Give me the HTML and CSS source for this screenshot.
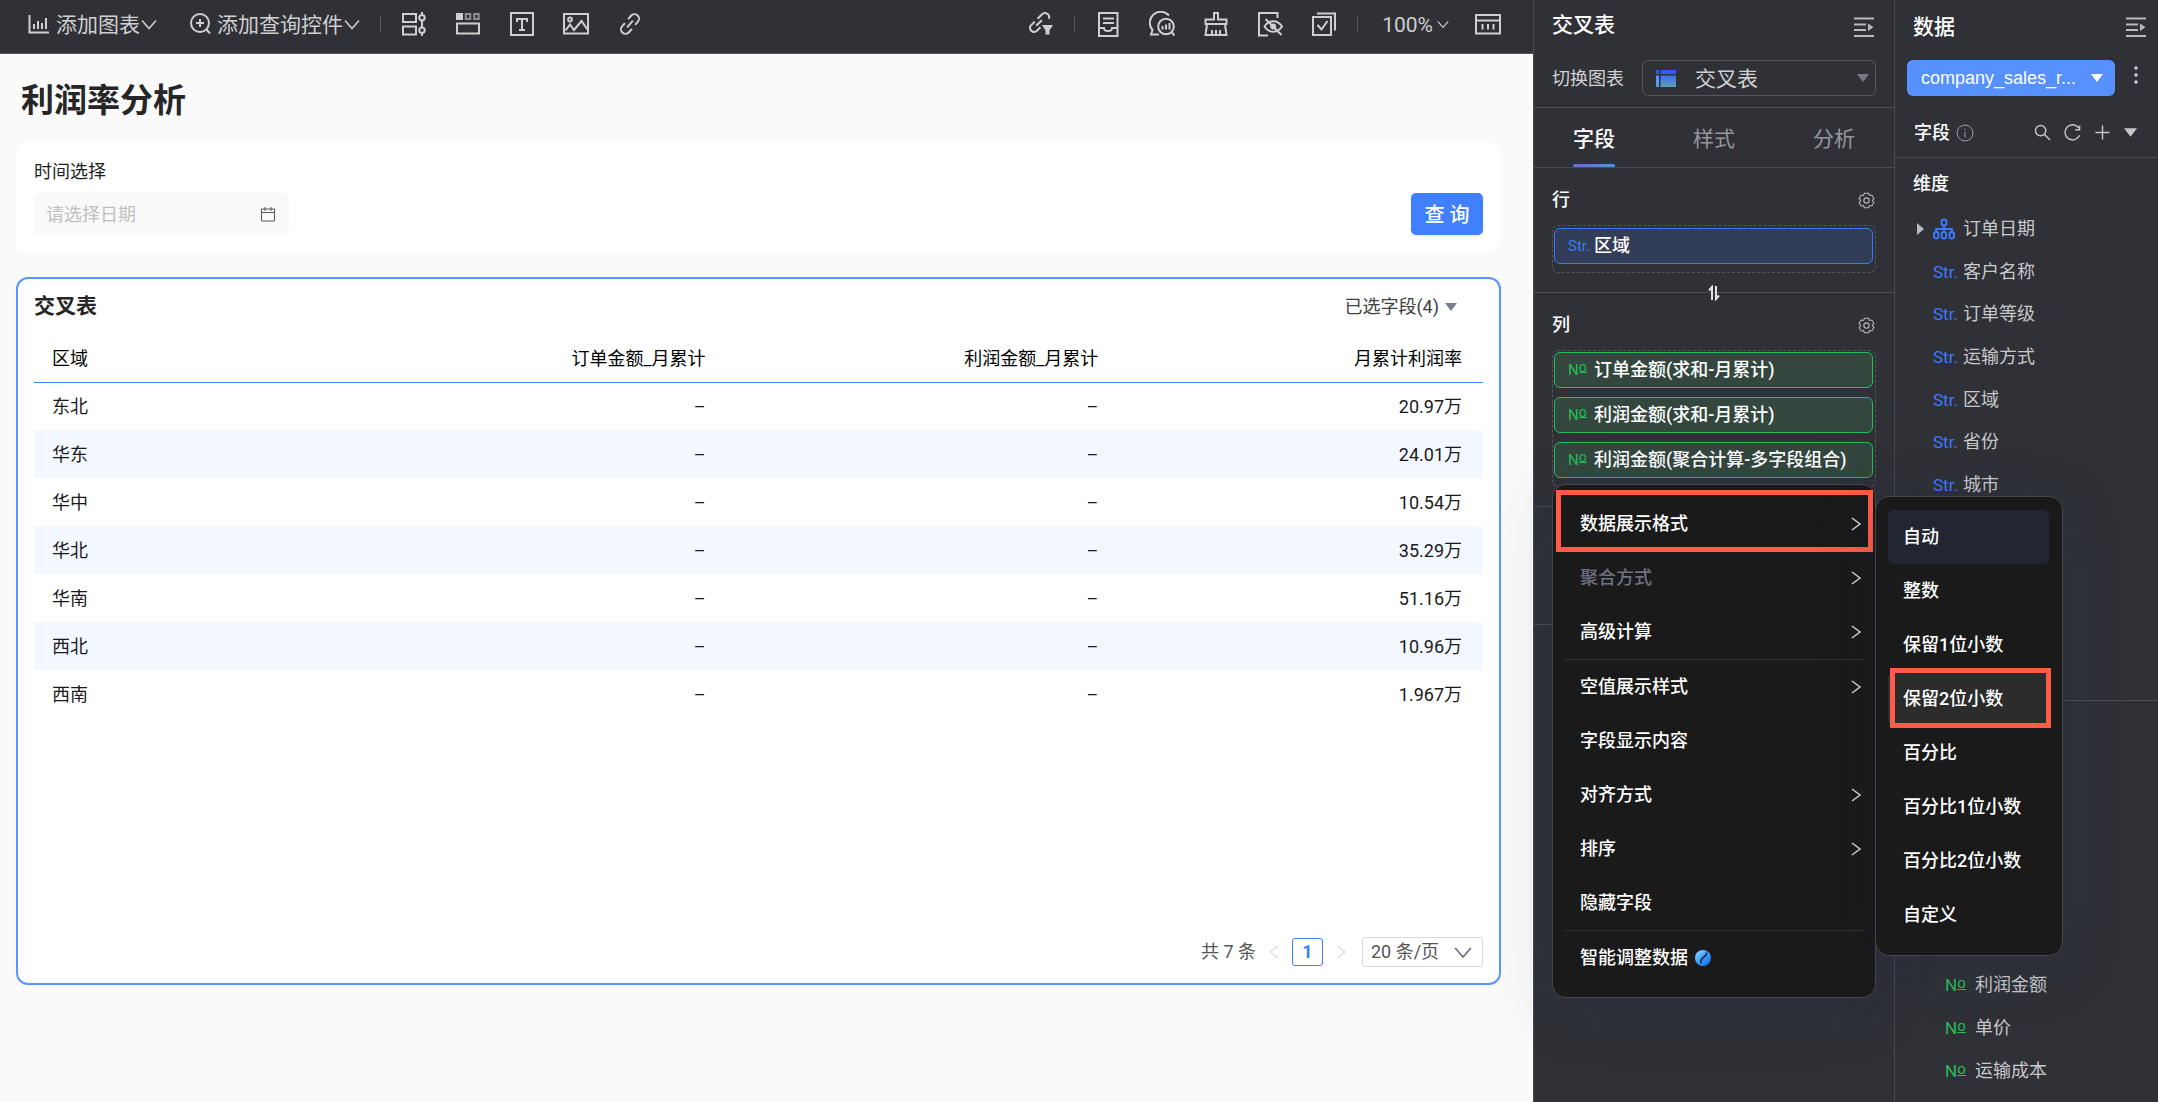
FILE: index.html
```html
<!DOCTYPE html>
<html lang="zh-CN">
<head>
<meta charset="utf-8">
<title>利润率分析</title>
<link rel="stylesheet" href="styles.css">
</head>
<body>
<svg class="defs" aria-hidden="true">
  <defs>
    <linearGradient id="crossFill" x1="0" y1="0" x2="0" y2="1"><stop offset="0" stop-color="#3f6bf0"/><stop offset="1" stop-color="#5fa0b8"/></linearGradient>
    <linearGradient id="orbFill" x1="0" y1="0" x2="1" y2="1"><stop offset="0" stop-color="#9adcff"/><stop offset="0.5" stop-color="#3aa0ff"/><stop offset="1" stop-color="#1660e8"/></linearGradient>
    <symbol id="i-down" viewBox="0 0 16 16"><path d="M1 4.500 8 12.500l7-8"/></symbol>
    <symbol id="i-right" viewBox="0 0 12 16"><path d="M2 2l8 6-8 6"/></symbol>
    <symbol id="i-tri" viewBox="0 0 12 8"><path d="M0 0h12L6 8z"/></symbol>
    <symbol id="i-gear" viewBox="0 0 16 16"><path d="M6 1.200h4l.8 2 2.200-.4 2 3.200-1.500 2 1.500 2-2 3.200-2.200-.4-.8 2H6l-.8-2-2.200.4L1 10l1.500-2L1 6l2-3.200 2.200.4z"/><circle cx="8" cy="8" r="2.500"/></symbol>
    <symbol id="i-fold" viewBox="0 0 20 20"><path d="M0 1.500h20M0 7.500h12M0 13h12M0 19h20"/><path class="solid" d="M14 6.500l5.500 3.800L14 14z"/></symbol>
  </defs>
</svg>
<div class="app">
  <main class="main">
    <header class="toolbar">
      <button class="tool-text"><svg class="icon" viewBox="0 0 26 26"><path d="M3.500 4v17.500H23M8 13v5M12 10v8M16 12v6M20 7v11"/></svg><span>添加图表</span><svg class="chev"><use href="#i-down"/></svg></button>
      <button class="tool-text"><svg class="icon" viewBox="0 0 26 26"><circle cx="13" cy="12" r="9"/><path d="M13 8v8M9 12h8M19.500 18.500l3.500 4"/></svg><span>添加查询控件</span><svg class="chev"><use href="#i-down"/></svg></button>
      <div class="tools ruled">
        <button aria-label="查询"><svg class="icon" viewBox="0 0 26 26"><rect x="2" y="3" width="13" height="8"/><rect x="2" y="15.500" width="13" height="8"/><path d="M21 1v3M21 9.500v7M21 22v3"/><circle cx="21" cy="6.700" r="2.700"/><circle cx="21" cy="19.200" r="2.700"/></svg></button>
        <button aria-label="布局"><svg class="icon" viewBox="0 0 26 26"><path class="solid" d="M1 2h7v7H1z"/><path class="dim" d="M10.800 3h4.500v5h-4.500zM19.200 3h4.500v5h-4.500z"/><rect x="2" y="12.500" width="22" height="10"/></svg></button>
        <button aria-label="文本"><svg class="icon" viewBox="0 0 26 26"><rect x="2" y="2" width="22" height="22"/><path d="M8 11V8h10v3M13 8v11M10 19h6"/></svg></button>
        <button aria-label="图片"><svg class="icon" viewBox="0 0 26 26"><rect x="1" y="3" width="24" height="19.500"/><circle cx="7" cy="8.500" r="1.900"/><path d="M2.500 19.500 7 13.500l4 5.500 7.500-9 6 8.500"/></svg></button>
        <button aria-label="链接"><svg class="icon" viewBox="0 0 26 26"><g transform="rotate(-50 13 13)"><path d="M15.500 8.500H20a4.500 4.500 0 0 1 0 9h-4.500M10.500 17.500H6a4.500 4.500 0 0 1 0-9h4.500M8.500 13h9"/></g></svg></button>
      </div>
      <div class="tools push">
        <button aria-label="联动"><svg class="icon" viewBox="0 0 26 26"><g transform="rotate(-45 11 12)"><path d="M13 8h6a4.200 4.200 0 0 1 2 8M9 16H3a4.200 4.200 0 0 1 0-8h6M7 12h8"/></g><path class="solid" d="M14 14h11l-3.500 5.500v4h-4v-4z"/></svg></button>
      </div>
      <div class="tools ruled">
        <button aria-label="草稿"><svg class="icon" viewBox="0 0 26 26"><rect x="4" y="2" width="18.500" height="23"/><path d="M8 7.500h11M8 12h11M4 17h5c0 4 8 4 8 0h5"/></svg></button>
        <button aria-label="智能问数"><svg class="icon" viewBox="0 0 26 26"><path d="M20 4.500A10.500 10.500 0 0 0 3.500 19L2 23.500h8"/><circle cx="17" cy="15.500" r="7.800"/><path d="M22.500 21l3 3.500M13.500 15v3.500M17 13.500v5M20.500 12v6.500"/></svg></button>
        <button aria-label="清空"><svg class="icon" viewBox="0 0 26 26"><path d="M2.500 13V8.500H11V2h4v6.500h8.500V13zM4 13.500 2.500 24h21L22 13.500M9 24v-5M13 24v-5M17 24v-5"/></svg></button>
        <button aria-label="隐藏"><svg class="icon" viewBox="0 0 26 26"><path d="M20.500 7V2H2v22.500h9M7.500 15.500c4.500-7 13-7 17.500 0-4.500 7-13 7-17.500 0zM8.500 8l16 16"/><circle class="solid" cx="16.200" cy="15.500" r="3"/></svg></button>
        <button aria-label="批量"><svg class="icon" viewBox="0 0 26 26"><rect x="2" y="6" width="18" height="18"/><path d="M6 2.500h18v17M6.500 14l4 4.500 6-8.500"/></svg></button>
      </div>
      <div class="tools ruled zoom">
        <button class="tool-text"><span>100%</span><svg class="chev small"><use href="#i-down"/></svg></button>
        <button aria-label="工具栏"><svg class="icon" viewBox="0 0 26 26"><path d="M1 4h24v18.500H1zM1 9.500h24M7.500 13v5.500M13 13v5.500M18.500 13v5.500"/></svg></button>
      </div>
    </header>

    <div class="canvas">
      <h1>利润率分析</h1>
      <section class="filter">
        <div class="field">
          <label for="date">时间选择</label>
          <div class="date"><input id="date" type="text" placeholder="请选择日期"><svg viewBox="0 0 16 16"><path d="M1.500 3h13v12h-13zM1.500 6.500h13M5 1v4M11 1v4"/></svg></div>
        </div>
        <button class="query">查 询</button>
      </section>

      <section class="report">
        <div class="report-head"><h2>交叉表</h2><button>已选字段(4)<svg class="tri"><use href="#i-tri"/></svg></button></div>
        <table>
          <colgroup><col class="c-area"><col class="c-wide"><col class="c-wide"><col></colgroup>
          <thead><tr><th>区域</th><th>订单金额_月累计</th><th>利润金额_月累计</th><th>月累计利润率</th></tr></thead>
          <tbody>
            <tr><td>东北</td><td>–</td><td>–</td><td>20.97万</td></tr>
            <tr><td>华东</td><td>–</td><td>–</td><td>24.01万</td></tr>
            <tr><td>华中</td><td>–</td><td>–</td><td>10.54万</td></tr>
            <tr><td>华北</td><td>–</td><td>–</td><td>35.29万</td></tr>
            <tr><td>华南</td><td>–</td><td>–</td><td>51.16万</td></tr>
            <tr><td>西北</td><td>–</td><td>–</td><td>10.96万</td></tr>
            <tr><td>西南</td><td>–</td><td>–</td><td>1.967万</td></tr>
          </tbody>
        </table>
        <nav class="pager">
          <span>共 7 条</span>
          <button class="flip back" aria-label="上一页"><svg><use href="#i-right"/></svg></button>
          <button class="page">1</button>
          <button class="flip" aria-label="下一页"><svg><use href="#i-right"/></svg></button>
          <span class="picker"><select aria-label="每页条数"><option>20 条/页</option></select><svg class="chev"><use href="#i-down"/></svg></span>
        </nav>
      </section>
    </div>
  </main>

  <aside class="panel config">
    <div class="config-head">
      <div class="panel-title"><h2>交叉表</h2><button aria-label="收起"><svg class="fold"><use href="#i-fold"/></svg></button></div>
      <div class="switch">
        <label for="chart">切换图表</label>
        <span class="picker"><svg class="cross" viewBox="0 0 20 17"><path fill="#3457ff" d="M0 0h3v4H0zM4.500 0H20v4H4.500z"/><path fill="#4f9cf0" d="M0 5.500h3V17H0z"/><path fill="url(#crossFill)" d="M4.500 5.500H20V17H4.500z"/></svg><select id="chart"><option>交叉表</option></select><svg class="tri"><use href="#i-tri"/></svg></span>
      </div>
    </div>
    <nav class="tabs"><button class="on">字段</button><button>样式</button><button>分析</button></nav>
    <section class="shelf">
      <div class="shelf-head"><h3>行</h3><button aria-label="行设置"><svg class="gear"><use href="#i-gear"/></svg></button></div>
      <div class="drop"><div class="chip dim-chip"><i class="str">Str.</i>区域</div></div>
      <button class="swap" aria-label="行列互换"><svg viewBox="0 0 12 16"><path d="M4 15V2L1 5.500M8 1v13l3-3.500"/></svg></button>
    </section>
    <section class="shelf">
      <div class="shelf-head"><h3>列</h3><button aria-label="列设置"><svg class="gear"><use href="#i-gear"/></svg></button></div>
      <div class="drop">
        <div class="chip num-chip"><i class="num">N<u>o</u></i>订单金额(求和-月累计)</div>
        <div class="chip num-chip"><i class="num">N<u>o</u></i>利润金额(求和-月累计)</div>
        <div class="chip num-chip"><i class="num">N<u>o</u></i>利润金额(聚合计算-多字段组合)
          <ul class="menu">
            <li class="has-sub"><button>数据展示格式<svg><use href="#i-right"/></svg></button><span class="mark mark-main"></span>
              <ul class="menu submenu">
                <li class="current"><button>自动</button></li>
                <li><button>整数</button></li>
                <li><button>保留1位小数</button></li>
                <li class="hover"><button>保留2位小数</button><span class="mark mark-sub"></span></li>
                <li><button>百分比</button></li>
                <li><button>百分比1位小数</button></li>
                <li><button>百分比2位小数</button></li>
                <li><button>自定义</button></li>
              </ul>
            </li>
            <li><button disabled>聚合方式<svg><use href="#i-right"/></svg></button></li>
            <li class="end-group"><button>高级计算<svg><use href="#i-right"/></svg></button></li>
            <li><button>空值展示样式<svg><use href="#i-right"/></svg></button></li>
            <li><button>字段显示内容</button></li>
            <li><button>对齐方式<svg><use href="#i-right"/></svg></button></li>
            <li><button>排序<svg><use href="#i-right"/></svg></button></li>
            <li class="end-group"><button>隐藏字段</button></li>
            <li><button>智能调整数据<svg class="orb" viewBox="0 0 16 16"><circle cx="8" cy="8" r="8" fill="url(#orbFill)"/><path d="M11.500 2.500C13 7 4 7 6 13.500" fill="none" stroke="#12203c" stroke-width="1.500"/></svg></button></li>
          </ul>
        </div>
      </div>
    </section>
    <section class="shelf"><div class="drop spare"></div></section>
  </aside>

  <aside class="panel data">
    <div class="data-head">
      <div class="panel-title"><h2>数据</h2><button aria-label="收起"><svg class="fold"><use href="#i-fold"/></svg></button></div>
      <div class="source"><button class="dataset">company_sales_r...<svg class="tri"><use href="#i-tri"/></svg></button><button class="more" aria-label="更多"><svg viewBox="0 0 4 18"><circle cx="2" cy="2" r="1.800"/><circle cx="2" cy="9" r="1.800"/><circle cx="2" cy="16" r="1.800"/></svg></button></div>
      <div class="fields-bar">
        <h3>字段</h3><svg class="info" viewBox="0 0 18 18"><circle cx="9" cy="9" r="8"/><path d="M9 8v5.500M9 4.500v1.800"/></svg>
        <div class="actions">
          <button aria-label="搜索"><svg viewBox="0 0 18 18"><circle cx="7" cy="7" r="5.500"/><path d="M11 11l6 6"/></svg></button>
          <button aria-label="刷新"><svg viewBox="0 0 18 18"><path d="M15.500 4A8 8 0 1 0 16.500 12M16.500 1.500V6h-4.500"/></svg></button>
          <button aria-label="新建"><svg viewBox="0 0 18 18"><path d="M9 1.500v15M1.500 9h15"/></svg></button>
          <button aria-label="更多操作"><svg class="tri"><use href="#i-tri"/></svg></button>
        </div>
      </div>
    </div>
    <section class="dims">
      <h3>维度</h3>
      <ul class="tree">
        <li><svg class="caret" viewBox="0 0 7 12"><path d="M0 0l7 6-7 6z"/></svg><svg class="org" viewBox="0 0 22 22"><rect x="8.500" y="1.500" width="5" height="6" rx="2.500"/><rect x="1" y="14" width="4.500" height="6.500" rx="2.200"/><rect x="8.700" y="14" width="4.500" height="6.500" rx="2.200"/><rect x="16.500" y="14" width="4.500" height="6.500" rx="2.200"/><path d="M11 7.500V14M3.200 14v-3h15.600v3"/></svg>订单日期</li>
        <li><i class="str">Str.</i>客户名称</li>
        <li><i class="str">Str.</i>订单等级</li>
        <li><i class="str">Str.</i>运输方式</li>
        <li><i class="str">Str.</i>区域</li>
        <li><i class="str">Str.</i>省份</li>
        <li><i class="str">Str.</i>城市</li>
      </ul>
    </section>
    <section class="measures">
      <ul class="tree">
        <li><i class="num">N<u>o</u></i>利润金额</li>
        <li><i class="num">N<u>o</u></i>单价</li>
        <li><i class="num">N<u>o</u></i>运输成本</li>
      </ul>
    </section>
  </aside>
</div>
</body>
</html>
```
FILE: styles.css
```css
* { box-sizing: border-box; }
body, h1, h2, h3, ul { margin: 0; padding: 0; }
body {
  background: #fafafa;
  color: #1f1f1f;
  font: 18px/24px Roboto, "Noto Sans CJK SC", sans-serif;
}
ul { list-style: none; }
i { font-style: normal; }
button, input, select {
  margin: 0; padding: 0; border: 0; background: none;
  font: inherit; color: inherit; appearance: none;
}
button { display: flex; align-items: center; cursor: pointer; }
svg { flex: none; fill: none; stroke: currentColor; display: block; }
.defs { position: absolute; width: 0; height: 0; }
.solid { fill: currentColor; stroke: none; }
.dim { opacity: .6; }
.icon { width: 26px; height: 26px; stroke-width: 2; }
.chev { width: 16px; height: 16px; stroke-width: 1.5; }
.chev.small { width: 12px; height: 12px; }
.tri { width: 12px; height: 8px; fill: currentColor; stroke: none; }

.app { display: flex; min-height: 100vh; }
.main { flex: 1; min-width: 0; display: flex; flex-direction: column; }
.panel { flex: none; background: #303137; color: #fff; border-left: 1px solid #4b4c51; }
.config { width: 361px; position: relative; z-index: 2; }
.data { width: 264px; display: flex; flex-direction: column; }

/* toolbar */
.toolbar {
  display: flex; align-items: center; gap: 20px; height: 54px; padding: 0 32px 6px 26px;
  background: #303137; border-bottom: 1px solid #55565a; color: #cfcfd1; font-size: 21px;
}
.tool-text { gap: 4px; white-space: nowrap; }
.tool-text span { padding-top: 2px; }
.tool-text .chev { margin-left: -3px; }
.tool-text + .tool-text { margin-left: 10px; }
.tools { display: flex; align-items: center; gap: 28px; }
.push { margin-left: auto; }
.ruled::before { content: ""; width: 1px; height: 18px; margin-right: -8px; background: #55565b; }
.zoom { gap: 26px; }
.zoom::before { margin-right: -2px; }
.zoom .chev { margin-left: 0; }

/* canvas */
.canvas { flex: 1; display: flex; flex-direction: column; padding: 0 32px 117px 16px; }
h1 { margin: 23px 0 17px 5px; font-size: 33px; line-height: 48px; font-weight: 700; color: #262626; }
.filter {
  display: flex; justify-content: space-between; align-items: flex-end;
  padding: 18px; background: #fff; border-radius: 12px;
}
.field label { display: block; margin-bottom: 9px; }
.date { display: flex; align-items: center; width: 255px; height: 42px; padding: 0 13px 0 12px; background: #f9f9f9; border-radius: 6px; }
.date input { flex: 1; min-width: 0; padding-top: 2px; }
.date input::placeholder { color: #bfbfbf; opacity: 1; }
.date svg { width: 16px; height: 16px; color: #595959; }
.query {
  width: 72px; height: 42px; padding-top: 1px; justify-content: center; border-radius: 5px;
  background: #4080ff; color: #fff; font-size: 20px; font-weight: 500; box-shadow: 0 2px 2px rgba(0, 0, 0, .06);
}
.report {
  flex: 1; display: flex; flex-direction: column; margin-top: 24px; padding: 13px 16px 16px;
  background: #fff; border: 2px solid #5a94ff; border-radius: 12px;
}
.report-head { display: flex; justify-content: space-between; align-items: center; height: 28px; padding-right: 26px; }
.report-head h2 { font-size: 21px; font-weight: 700; color: #262626; }
.report-head button { gap: 6px; padding-top: 1px; color: #404040; }
.report-head .tri { color: #7a7f90; }
table { width: 100%; margin-top: 14px; border-collapse: collapse; table-layout: fixed; color: #000; }
.c-area { width: 20.7%; }
.c-wide { width: 27.1%; }
th, td { height: 48px; padding: 2px 21px 0 18px; text-align: right; font-weight: 400; }
th { border-bottom: 1px solid #3f80ff; }
td { color: #1a1a1a; }
th:first-child, td:first-child { text-align: left; }
tbody tr:nth-child(even) { background: #f3f7ff; }
.pager { display: flex; align-items: center; justify-content: flex-end; margin-top: auto; color: #555; }
.flip { padding: 0 12px; color: #ccc; }
.flip svg { width: 12px; height: 16px; }
.back svg { transform: scaleX(-1); }
.page { width: 31px; height: 28px; justify-content: center; border: 1px solid #4080ff; border-radius: 3px; color: #4080ff; font-weight: 700; }
.pager .picker { position: relative; display: flex; align-items: center; margin-left: 3px; }
.pager select { width: 121px; height: 30px; padding-left: 8px; border: 1px solid #d9d9d9; border-radius: 3px; }
.pager .picker .chev { position: absolute; right: 10px; width: 20px; height: 18px; color: #6b7280; pointer-events: none; }

/* panels */
h2, h3 { font-size: 18px; font-weight: 500; }
.panel-title { display: flex; justify-content: space-between; align-items: flex-start; }
.panel-title h2 { font-size: 21px; }
.fold { width: 20px; height: 20px; color: #b9babd; stroke-width: 2; }
.config-head { padding: 13px 20px 11px 18px; border-bottom: 1px solid #4b4c51; }
.config-head .fold { margin-top: 4px; }
.switch { display: flex; justify-content: space-between; align-items: center; margin: 23px -2px 0 0; color: #d0d0d3; }
.switch label { padding-top: 2px; }
.switch .picker { position: relative; display: flex; align-items: center; width: 234px; }
.switch select { width: 100%; height: 36px; padding: 2px 0 0 52px; border: 1px solid #55565c; border-radius: 6px; font-size: 21px; line-height: 30px; }
.cross { position: absolute; left: 14px; width: 20px; height: 17px; stroke: none; }
.switch .tri { position: absolute; right: 7px; color: #777986; pointer-events: none; }
.tabs { display: flex; height: 60px; border-bottom: 1px solid #4b4c51; font-size: 21px; color: #96979b; }
.tabs button { flex: 1; justify-content: center; position: relative; padding-top: 2px; }
.tabs .on { color: #fff; font-weight: 500; }
.tabs .on::after { content: ""; position: absolute; bottom: 0; width: 42px; height: 3px; border-radius: 2px; background: linear-gradient(90deg, #6f66d0, #5093d6); }
.shelf { position: relative; padding: 20px 18px 19px; border-bottom: 1px solid #4b4c51; }
.shelf-head { display: flex; justify-content: space-between; align-items: center; margin-bottom: 13px; padding-right: 1px; }
.gear { width: 17px; height: 17px; color: #b9babd; }
.drop { display: flex; flex-direction: column; gap: 9px; padding: 2px 2px 8px 1px; border: 1px dashed #55565c; border-radius: 6px; }
.shelf + .shelf .drop { padding-top: 1px; }
.spare { height: 41px; margin-top: 37px; }
.chip { position: relative; display: flex; align-items: center; gap: 7px; height: 36px; padding-left: 13px; border: 1px solid; border-radius: 6px; font-weight: 500; white-space: nowrap; }
.dim-chip { background: #323e57; border-color: #3a78ff; }
.num-chip { background: #33473e; border-color: #27bd55; }
.chip > * { font-weight: 400; }
.str { width: 24px; color: #3b78ff; font-size: 17px; }
.num { width: 24px; color: #27bd55; font-size: 17px; }
.num u { display: inline-block; border-bottom: 1px solid; font-size: 15px; line-height: 11px; text-decoration: none; vertical-align: 3px; }
.chip > i { width: 19px; font-size: 15px; }
.chip > .num u { font-size: 14px; line-height: 10px; }
.swap { position: absolute; left: 50%; bottom: -9px; margin-left: -6px; color: #e0e0e2; }
.swap svg { width: 12px; height: 16px; stroke-width: 2; }

/* context menus */
.menu {
  position: absolute; top: 41px; left: -3px; width: 324px; padding: 12px; z-index: 3;
  background: #1a1a1a; border: 1px solid #45464b; border-radius: 14px; color: #fff;
  box-shadow: 0 12px 64px rgba(20, 40, 80, .16);
}
.menu .submenu { top: -1px; left: calc(100% + 12px); width: 188px; padding: 13px 13px 13px 12px; }
.menu li { position: relative; font-weight: 500; }
.menu li > button { width: 100%; height: 54px; padding: 0 1px 0 15px; justify-content: space-between; border-radius: 6px; }
.menu button svg { width: 12px; height: 16px; color: #d5d5d7; stroke-width: 1.5; }
.menu button .orb { width: 16px; height: 16px; margin: 0 auto 0 7px; stroke: none; }
.menu button:disabled { color: #6f7080; }
.end-group { border-bottom: 1px solid #303133; }
.current > button { background: #222532; }
.hover > button { background: #2c2c2c; }
.mark { position: absolute; border: 5px solid #ff5a4a; pointer-events: none; }
.mark-main { inset: -7px -10px -1px -9px; }
.mark-sub { inset: -4px -2px -2px 2px; }

/* data panel */
.data-head { padding: 15px 12px 0 12px; border-bottom: 1px solid #4b4c51; }
.data-head .panel-title { padding-left: 6px; }
.data-head .fold { margin-top: 2px; }
.source { display: flex; align-items: center; justify-content: space-between; margin-top: 21px; padding-right: 8px; }
.dataset {
  width: 208px; height: 36px; padding: 0 12px 0 14px; justify-content: space-between; border-radius: 6px;
  background: #5790ff; font: 500 18px/24px "Liberation Sans", Arial, sans-serif;
}
.more svg { width: 4px; height: 18px; fill: #c8c8ca; stroke: none; }
.more { margin-top: -6px; }
.fields-bar { display: flex; align-items: center; height: 61px; padding: 12px 9px 0 7px; }
.info { width: 18px; height: 18px; margin-left: 6px; color: #9b9ca0; }
.actions { display: flex; align-items: center; gap: 13px; margin-left: auto; color: #c8c8ca; }
.actions svg { width: 17px; height: 17px; stroke-width: 1.5; }
.actions .tri { width: 13px; height: 9px; }
.dims { flex: 27 0 0; padding: 14px 0 0 18px; border-bottom: 1px solid #4b4c51; }
.measures { flex: 20 0 0; display: flex; flex-direction: column; justify-content: flex-end; padding: 0 0 10px 50px; }
.tree { display: grid; grid-auto-rows: 1fr; color: #c8c8ca; }
.dims .tree { height: 298px; margin-top: 12px; }
.measures .tree { height: 128px; }
.tree li { display: flex; align-items: center; gap: 6px; padding-left: 20px; }
.measures li { padding-left: 0; }
.tree li:has(.caret) { padding-left: 4px; }
.caret { width: 7px; height: 12px; fill: #b9babd; stroke: none; margin-right: 3px; }
.org { width: 22px; height: 22px; margin-right: 2px; color: #3b78ff; stroke-width: 2; }
```
